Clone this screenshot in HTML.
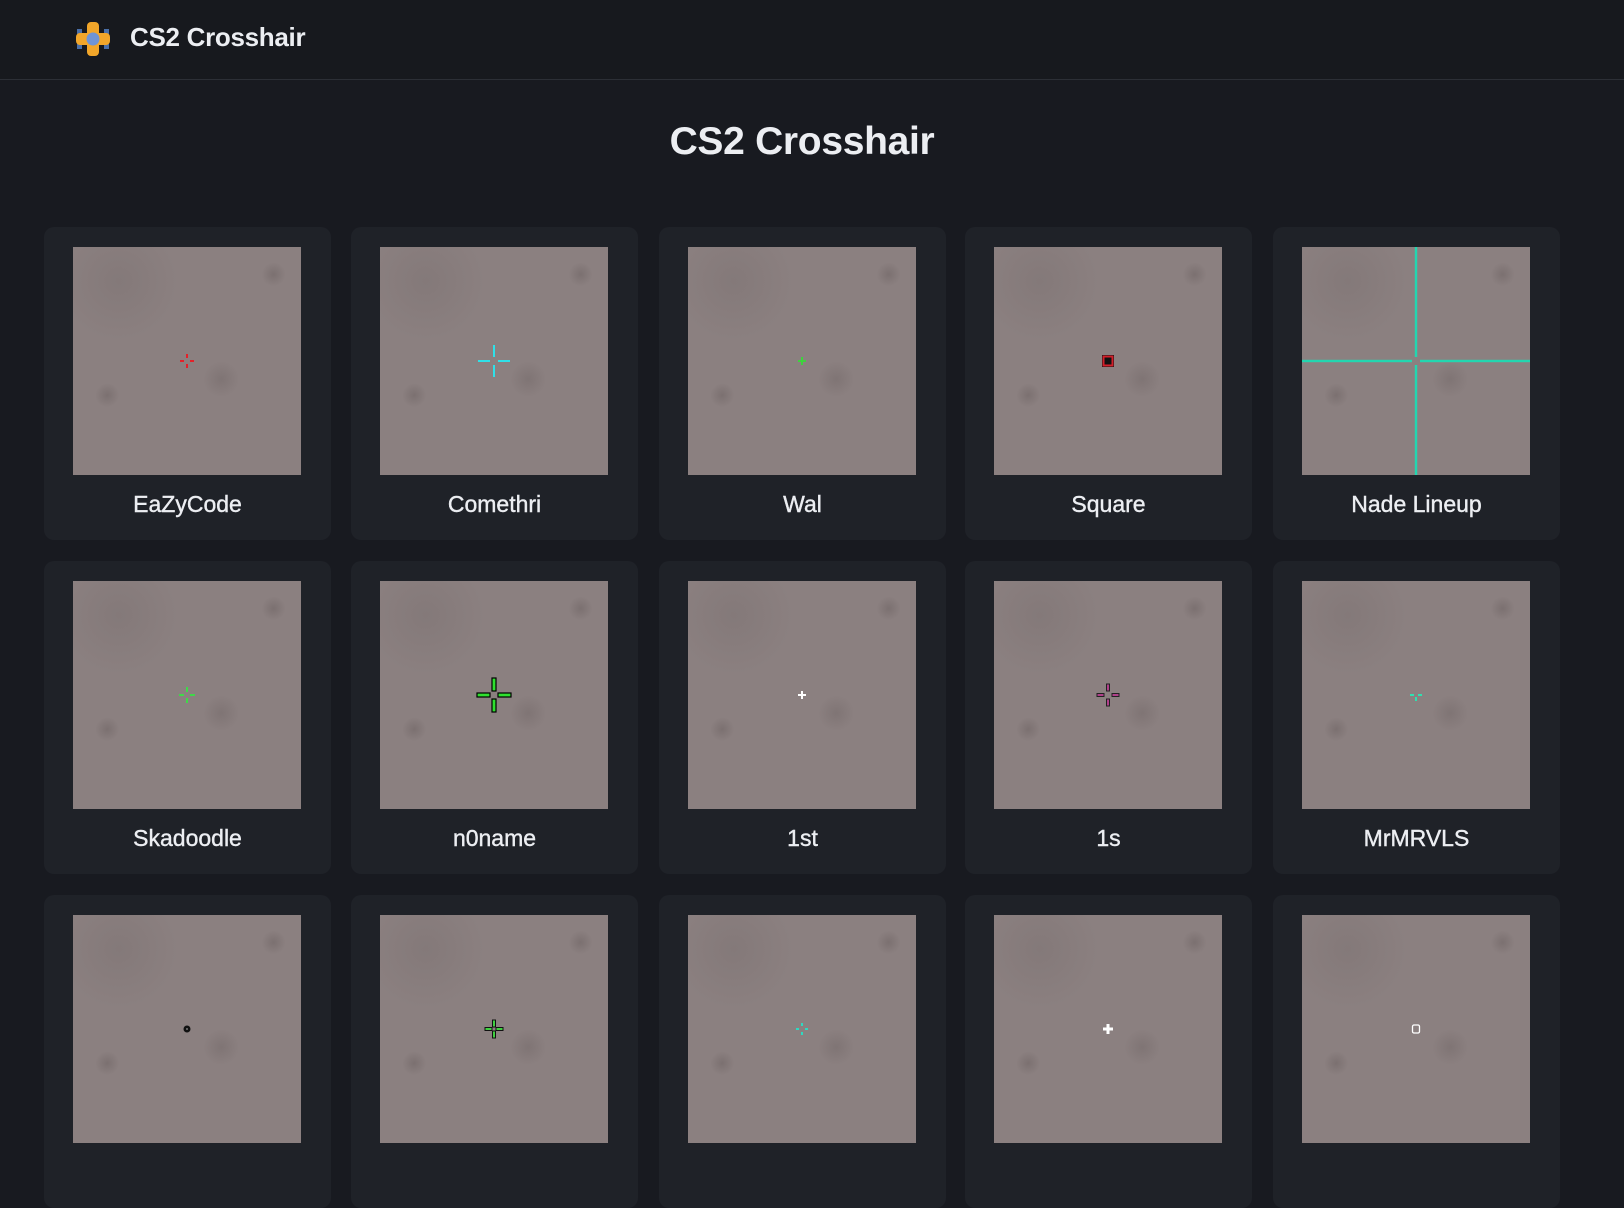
<!DOCTYPE html>
<html><head><meta charset="utf-8"><style>
*{margin:0;padding:0;box-sizing:border-box}
body{width:1624px;height:1080px;overflow:hidden;background:#181a20;font-family:"Liberation Sans",sans-serif;position:relative}
.hdr{position:absolute;left:0;top:0;width:1624px;height:80px;border-bottom:1px solid #2c2f36;background:#17191e}
.logo{position:absolute;left:76px;top:22px}
.brand{position:absolute;left:130px;top:22px;color:#eceef2;font-size:26px;font-weight:bold;letter-spacing:-0.3px}
h1{position:absolute;left:0;width:1604px;top:120px;text-align:center;color:#eceef2;font-size:39px;font-weight:bold;letter-spacing:-0.3px}
.card{position:absolute;width:287px;height:313px;background:#1f2228;border-radius:10px}
.img{position:absolute;left:29px;top:20px;width:228px;height:228px;background:
radial-gradient(circle at 88% 12%,rgba(60,50,50,.2) 0,rgba(60,50,50,0) 12px),
radial-gradient(circle at 15% 65%,rgba(60,50,50,.2) 0,rgba(60,50,50,0) 12px),
radial-gradient(circle at 65% 58%,rgba(60,50,50,.15) 0,rgba(60,50,50,0) 18px),
radial-gradient(circle at 20% 15%,rgba(110,100,100,.25) 0,rgba(110,100,100,0) 60px),
#8b8080;overflow:hidden}
.img svg{position:absolute;left:0;top:0}
.lbl{position:absolute;left:0;width:287px;top:264px;text-align:center;color:#eceef2;font-size:23px;-webkit-text-stroke:0.4px #eceef2}
</style></head><body>
<div class="hdr">
<svg class="logo" width="34" height="34" viewBox="0 0 34 34">
<rect x="1" y="7" width="5" height="5" fill="#4a6fa8"/><rect x="28" y="7" width="5" height="5" fill="#4a6fa8"/>
<rect x="1" y="22" width="5" height="5" fill="#4a6fa8"/><rect x="28" y="22" width="5" height="5" fill="#4a6fa8"/>
<rect x="11" y="0" width="12" height="34" rx="4" fill="#f2a62a"/><rect x="0" y="11" width="34" height="12" rx="4" fill="#f2a62a"/>
<circle cx="17" cy="17" r="6.5" fill="#6f94d6"/></svg>
<div class="brand">CS2 Crosshair</div></div>
<h1>CS2 Crosshair</h1>

<div class="card" style="left:44px;top:227px"><div class="img"><svg width="228" height="228" viewBox="-114 -114 228 228">
<g fill="#e3222a"><rect x="-1" y="-7" width="2" height="4"/><rect x="-1" y="3" width="2" height="4"/><rect x="-7" y="-1" width="4" height="2"/><rect x="3" y="-1" width="4" height="2"/></g></svg></div><div class="lbl">EaZyCode</div></div>
<div class="card" style="left:351px;top:227px"><div class="img"><svg width="228" height="228" viewBox="-114 -114 228 228">
<g fill="#2fe0e8"><rect x="-1" y="-16" width="2" height="12"/><rect x="-1" y="4" width="2" height="12"/><rect x="-16" y="-1" width="12" height="2"/><rect x="4" y="-1" width="12" height="2"/></g></svg></div><div class="lbl">Comethri</div></div>
<div class="card" style="left:659px;top:227px"><div class="img"><svg width="228" height="228" viewBox="-114 -114 228 228">
<g fill="#3ed23e"><rect x="-1" y="-4" width="2" height="8"/><rect x="-4" y="-1" width="8" height="2"/></g></svg></div><div class="lbl">Wal</div></div>
<div class="card" style="left:965px;top:227px"><div class="img"><svg width="228" height="228" viewBox="-114 -114 228 228">
<rect x="-6" y="-6" width="12" height="12" fill="#111"/><rect x="-4.5" y="-4.5" width="9" height="9" fill="none" stroke="#d2202a" stroke-width="2"/></svg></div><div class="lbl">Square</div></div>
<div class="card" style="left:1273px;top:227px"><div class="img"><svg width="228" height="228" viewBox="-114 -114 228 228">
<g fill="#23d6b0"><rect x="-1.2" y="-114" width="2.4" height="110"/><rect x="-1.2" y="4" width="2.4" height="110"/><rect x="-114" y="-1.2" width="110" height="2.4"/><rect x="4" y="-1.2" width="110" height="2.4"/></g></svg></div><div class="lbl">Nade Lineup</div></div>

<div class="card" style="left:44px;top:561px"><div class="img"><svg width="228" height="228" viewBox="-114 -114 228 228">
<g fill="#3fd84a"><rect x="-1" y="-8" width="2" height="5"/><rect x="-1" y="3" width="2" height="5"/><rect x="-8" y="-1" width="5" height="2"/><rect x="3" y="-1" width="5" height="2"/></g></svg></div><div class="lbl">Skadoodle</div></div>
<div class="card" style="left:351px;top:561px"><div class="img"><svg width="228" height="228" viewBox="-114 -114 228 228">
<g fill="#2fe02f" stroke="#000" stroke-width="1.2"><rect x="-2" y="-17" width="4" height="13"/><rect x="-2" y="4" width="4" height="13"/><rect x="-17" y="-2" width="13" height="4"/><rect x="4" y="-2" width="13" height="4"/></g></svg></div><div class="lbl">n0name</div></div>
<div class="card" style="left:659px;top:561px"><div class="img"><svg width="228" height="228" viewBox="-114 -114 228 228">
<g fill="#fff"><rect x="-1" y="-4" width="2" height="8"/><rect x="-4" y="-1" width="8" height="2"/></g></svg></div><div class="lbl">1st</div></div>
<div class="card" style="left:965px;top:561px"><div class="img"><svg width="228" height="228" viewBox="-114 -114 228 228">
<g fill="#b0408a" stroke="#222" stroke-width="1"><rect x="-1.5" y="-11" width="3" height="7"/><rect x="-1.5" y="4" width="3" height="7"/><rect x="-11" y="-1.5" width="7" height="3"/><rect x="4" y="-1.5" width="7" height="3"/></g></svg></div><div class="lbl">1s</div></div>
<div class="card" style="left:1273px;top:561px"><div class="img"><svg width="228" height="228" viewBox="-114 -114 228 228">
<g fill="#2fe0b0"><rect x="-1" y="2" width="2" height="4"/><rect x="-6" y="-1" width="4" height="2"/><rect x="2" y="-1" width="4" height="2"/></g></svg></div><div class="lbl">MrMRVLS</div></div>

<div class="card" style="left:44px;top:895px"><div class="img"><svg width="228" height="228" viewBox="-114 -114 228 228">
<circle r="3.5" fill="#111"/><circle r="1" fill="#777"/></svg></div></div>
<div class="card" style="left:351px;top:895px"><div class="img"><svg width="228" height="228" viewBox="-114 -114 228 228">
<g fill="#3fd040" stroke="#111" stroke-width="1"><rect x="-1.5" y="-9" width="3" height="7"/><rect x="-1.5" y="2" width="3" height="7"/><rect x="-9" y="-1.5" width="7" height="3"/><rect x="2" y="-1.5" width="7" height="3"/></g></svg></div></div>
<div class="card" style="left:659px;top:895px"><div class="img"><svg width="228" height="228" viewBox="-114 -114 228 228">
<g fill="#2fd8c0"><rect x="-1" y="-6" width="2" height="3"/><rect x="-1" y="3" width="2" height="3"/><rect x="-6" y="-1" width="3" height="2"/><rect x="3" y="-1" width="3" height="2"/></g></svg></div></div>
<div class="card" style="left:965px;top:895px"><div class="img"><svg width="228" height="228" viewBox="-114 -114 228 228">
<g fill="#fff"><rect x="-1.5" y="-5" width="3" height="10"/><rect x="-5" y="-1.5" width="10" height="3"/></g></svg></div></div>
<div class="card" style="left:1273px;top:895px"><div class="img"><svg width="228" height="228" viewBox="-114 -114 228 228">
<rect x="-3.5" y="-4" width="7" height="8" rx="1.5" fill="none" stroke="#fff" stroke-width="1.3"/></svg></div></div>
</body></html>
